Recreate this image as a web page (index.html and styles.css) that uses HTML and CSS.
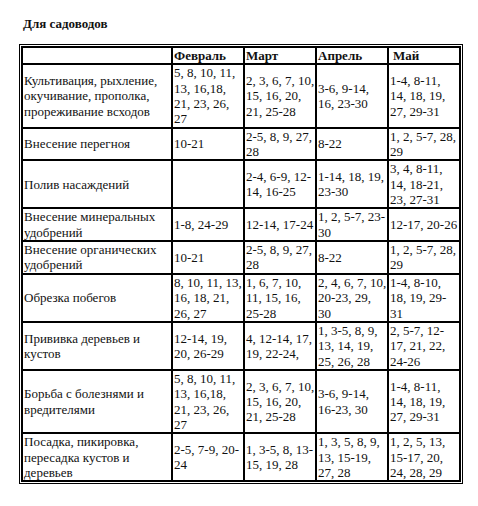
FILE: index.html
```html
<!DOCTYPE html>
<html lang="ru">
<head>
<meta charset="utf-8">
<title>Для садоводов</title>
<link rel="stylesheet" href="styles.css">
</head>
<body>
<div class="page">
  <p class="title">Для садоводов</p>
  <div class="frame">
    <table class="calendar">
      <colgroup>
        <col class="c-work">
        <col class="c-month">
        <col class="c-month">
        <col class="c-month">
        <col class="c-month">
      </colgroup>
      <thead>
        <tr>
          <th></th>
          <th>Февраль</th>
          <th>Март</th>
          <th>Апрель</th>
          <th class="may">Май</th>
        </tr>
      </thead>
      <tbody>
        <tr>
          <td>Культивация, рыхление,<br>окучивание, прополка,<br>прореживание всходов</td>
          <td>5, 8, 10, 11,<br>13, 16,18,<br>21, 23, 26,<br>27</td>
          <td>2, 3, 6, 7, 10,<br>15, 16, 20,<br>21, 25-28</td>
          <td>3-6, 9-14,<br>16, 23-30</td>
          <td>1-4, 8-11,<br>14, 18, 19,<br>27, 29-31</td>
        </tr>
        <tr>
          <td>Внесение перегноя</td>
          <td>10-21</td>
          <td>2-5, 8, 9, 27,<br>28</td>
          <td>8-22</td>
          <td>1, 2, 5-7, 28,<br>29</td>
        </tr>
        <tr>
          <td>Полив насаждений</td>
          <td></td>
          <td>2-4, 6-9, 12-<br>14, 16-25</td>
          <td>1-14, 18, 19,<br>23-30</td>
          <td>3, 4, 8-11,<br>14, 18-21,<br>23, 27-31</td>
        </tr>
        <tr>
          <td>Внесение минеральных<br>удобрений</td>
          <td>1-8, 24-29</td>
          <td>12-14, 17-24</td>
          <td>1, 2, 5-7, 23-<br>30</td>
          <td>12-17, 20-26</td>
        </tr>
        <tr>
          <td>Внесение органических<br>удобрений</td>
          <td>10-21</td>
          <td>2-5, 8, 9, 27,<br>28</td>
          <td>8-22</td>
          <td>1, 2, 5-7, 28,<br>29</td>
        </tr>
        <tr>
          <td>Обрезка побегов</td>
          <td>8, 10, 11, 13,<br>16, 18, 21,<br>26, 27</td>
          <td>1, 6, 7, 10,<br>11, 15, 16,<br>25-28</td>
          <td>2, 4, 6, 7, 10,<br>20-23, 29,<br>30</td>
          <td>1-4, 8-10,<br>18, 19, 29-<br>31</td>
        </tr>
        <tr>
          <td>Прививка деревьев и<br>кустов</td>
          <td>12-14, 19,<br>20, 26-29</td>
          <td>4, 12-14, 17,<br>19, 22-24,</td>
          <td>1, 3-5, 8, 9,<br>13, 14, 19,<br>25, 26, 28</td>
          <td>2, 5-7, 12-<br>17, 21, 22,<br>24-26</td>
        </tr>
        <tr>
          <td>Борьба с болезнями и<br>вредителями</td>
          <td>5, 8, 10, 11,<br>13, 16,18,<br>21, 23, 26,<br>27</td>
          <td>2, 3, 6, 7, 10,<br>15, 16, 20,<br>21, 25-28</td>
          <td>3-6, 9-14,<br>16-23, 30</td>
          <td>1-4, 8-11,<br>14, 18, 19,<br>27, 29-31</td>
        </tr>
        <tr>
          <td>Посадка, пикировка,<br>пересадка кустов и<br>деревьев</td>
          <td>2-5, 7-9, 20-<br>24</td>
          <td>1, 3-5, 8, 13-<br>15, 19, 28</td>
          <td>1, 3, 5, 8, 9,<br>13, 15-19,<br>27, 28</td>
          <td>1, 2, 5, 13,<br>15-17, 20,<br>24, 28, 29</td>
        </tr>
      </tbody>
    </table>
  </div>
</div>
</body>
</html>
```
FILE: styles.css
```css
html, body {
  margin: 0;
  padding: 0;
  background: #fff;
}

body {
  font-family: "Liberation Serif", "Times New Roman", serif;
  font-size: 13px;
  line-height: 15.35px;
  color: #111;
}

.page {
  padding: 16px 0 0 19px;
}

.title {
  margin: 0 0 12px 4px;
  font-weight: bold;
  line-height: 16px;
}

.frame {
  display: inline-block;
  border: 1px solid #000;
  padding: 1px;
}

.calendar {
  border-collapse: collapse;
  table-layout: fixed;
  width: 439px;
  border: 2px solid #000;
}

.c-work {
  width: 150px;
}

.c-month {
  width: 72px;
}

.calendar th,
.calendar td {
  border: 2px solid #000;
  padding: 0 1px;
  text-align: left;
  vertical-align: middle;
  white-space: nowrap;
}

.calendar th {
  font-weight: bold;
}

.calendar th.may {
  padding-left: 4px;
}
```
